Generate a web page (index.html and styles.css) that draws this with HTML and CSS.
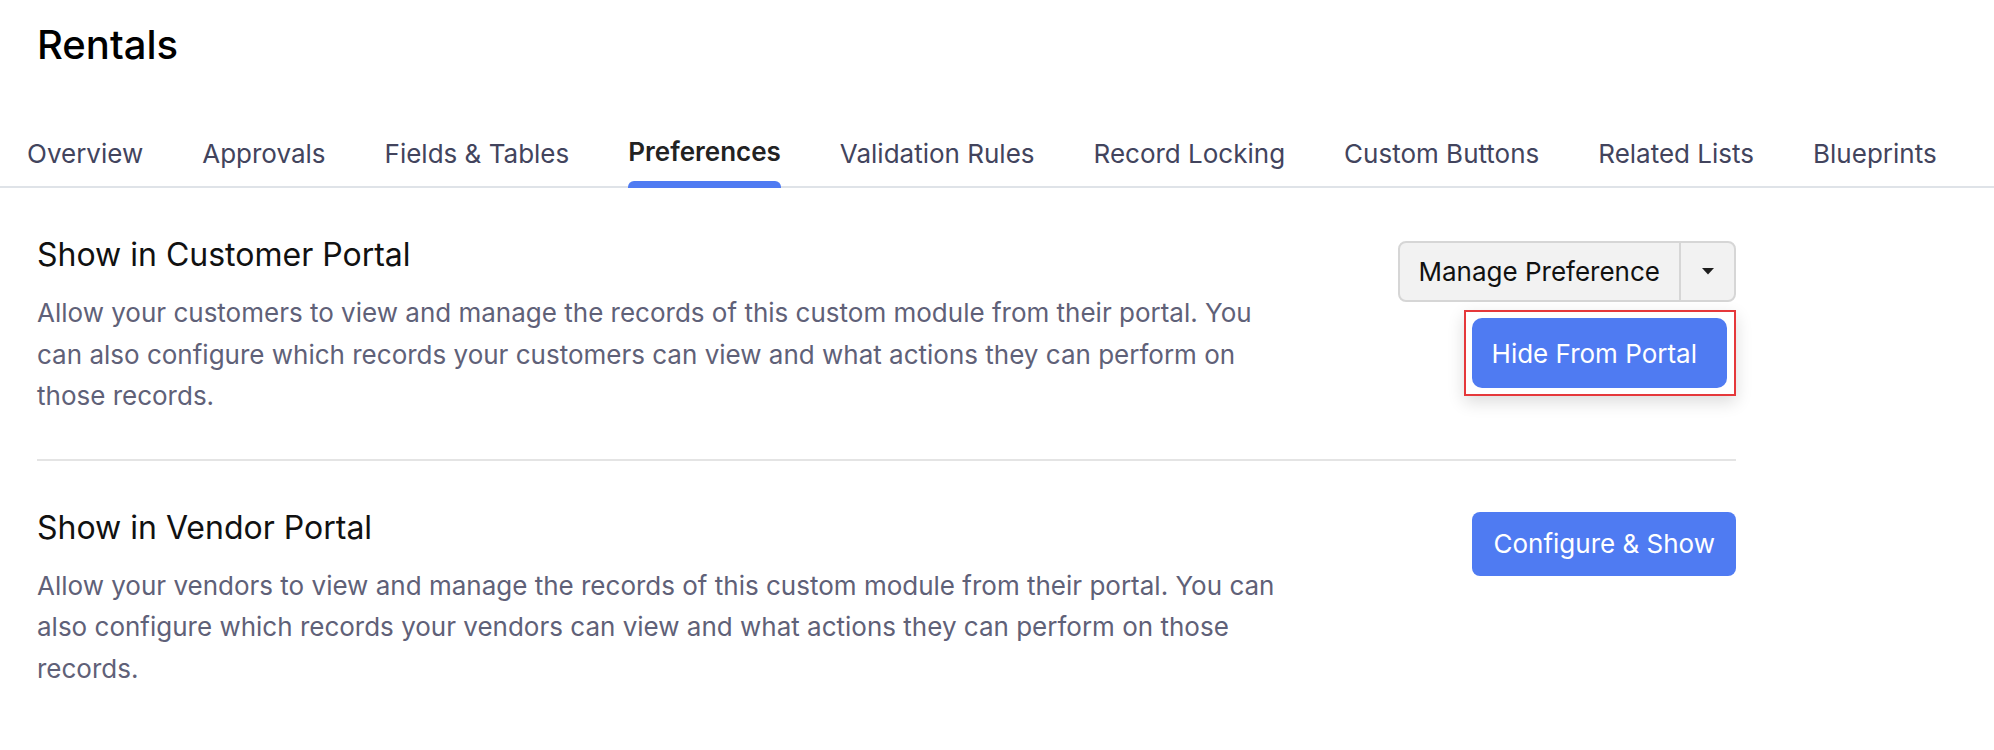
FILE: index.html
```html
<!DOCTYPE html>
<html lang="en">
<head>
<meta charset="utf-8">
<title>Rentals - Preferences</title>
<link rel="stylesheet" href="styles.css">
</head>
<body>
<div class="page">
  <header class="header">
    <h1 class="title">Rentals</h1>
  </header>
  <nav class="tabs">
    <a class="tab">Overview</a>
    <a class="tab">Approvals</a>
    <a class="tab">Fields &amp; Tables</a>
    <a class="tab tab--active">Preferences</a>
    <a class="tab">Validation Rules</a>
    <a class="tab">Record Locking</a>
    <a class="tab">Custom Buttons</a>
    <a class="tab">Related Lists</a>
    <a class="tab">Blueprints</a>
  </nav>
  <main class="content">
    <section class="pref pref--first">
      <div class="pref__text">
        <h2 class="pref__title">Show in Customer Portal</h2>
        <p class="pref__desc">Allow your customers to view and manage the records of this custom module from their portal. You can also configure which records your customers can view and what actions they can perform on those records.</p>
      </div>
      <div class="pref__actions pref__actions--menu">
        <div class="split-btn">
          <button class="split-btn__main">Manage Preference</button>
          <button class="split-btn__toggle" aria-label="More">
            <svg class="caret" width="12" height="7" viewBox="0 0 12 7"><path d="M0 0 L12 0 L6 6.5 Z" fill="#1f1f1f"/></svg>
          </button>
        </div>
        <div class="dropdown">
          <button class="btn-primary btn-primary--menu">Hide From Portal</button>
        </div>
      </div>
    </section>
    <section class="pref">
      <div class="pref__text">
        <h2 class="pref__title">Show in Vendor Portal</h2>
        <p class="pref__desc">Allow your vendors to view and manage the records of this custom module from their portal. You can also configure which records your vendors can view and what actions they can perform on those records.</p>
      </div>
      <div class="pref__actions pref__actions--plain">
        <button class="btn-primary">Configure &amp; Show</button>
      </div>
    </section>
  </main>
</div>
</body>
</html>
```

FILE: styles.css
```css
* { box-sizing: border-box; }

body {
  margin: 0;
  background: #ffffff;
  font-family: Inter, "Noto Sans", "Liberation Sans", sans-serif;
}

.header {
  padding: 21px 0 0 37px;
}

.title {
  margin: 0 0 67px;
  font-size: 40px;
  line-height: 48px;
  font-weight: 500;
  color: #000000;
}

.tabs {
  display: flex;
  align-items: flex-end;
  gap: 59px;
  padding-left: 27px;
  border-bottom: 2px solid #dfe3e8;
}

.tab {
  position: relative;
  font-size: 26px;
  line-height: 32px;
  color: #42445d;
  padding-bottom: 16px;
  white-space: nowrap;
  text-decoration: none;
}

.tab--active {
  font-weight: 600;
  color: #222222;
  padding-bottom: 18px;
}

.tab--active::after {
  content: "";
  position: absolute;
  left: 0;
  right: 0;
  bottom: -2px;
  height: 7px;
  background: #4f7bf2;
  border-radius: 6px 6px 0 0;
}

.content {
  padding: 0 258px 0 37px;
}

.pref {
  display: flex;
  justify-content: space-between;
  align-items: flex-start;
  padding: 47px 0 42px;
}

.pref--first {
  border-bottom: 2px solid #e4e4e4;
}

.pref__text {
  max-width: 1255px;
}

.pref__title {
  margin: 0 0 17px;
  font-size: 32px;
  line-height: 40px;
  font-weight: 400;
  color: #111111;
}

.pref__desc {
  margin: 0;
  font-size: 26px;
  line-height: 41.5px;
  color: #5f6178;
}

.pref__actions {
  position: relative;
  flex: none;
}

.pref__actions--menu {
  margin-top: 6px;
}

.pref__actions--plain {
  margin-top: 4px;
}

.split-btn {
  display: flex;
  height: 61px;
  border: 2px solid #d6d6d6;
  border-radius: 8px;
  background: #f2f2f2;
}

.split-btn__main {
  font-family: inherit;
  font-size: 26px;
  color: #111111;
  background: none;
  border: 0;
  border-right: 2px solid #d6d6d6;
  padding: 0 19px;
}

.split-btn__toggle {
  width: 53px;
  display: flex;
  align-items: center;
  justify-content: center;
  background: none;
  border: 0;
  padding: 0;
}

.dropdown {
  position: absolute;
  right: 0;
  top: calc(100% + 8px);
  border: 2px solid #e5383b;
  padding: 6px 7px 6px 6px;
  background: #ffffff;
  box-shadow: 0 6px 16px rgba(0, 0, 0, 0.14);
}

.btn-primary {
  font-family: inherit;
  font-size: 26px;
  color: #ffffff;
  background: #4f7bf2;
  border: 0;
  border-radius: 8px;
  height: 64px;
  padding: 0 21px;
  white-space: nowrap;
}

.btn-primary--menu {
  height: 70px;
  padding: 0 30px 0 20px;
  border-radius: 10px;
}
```
